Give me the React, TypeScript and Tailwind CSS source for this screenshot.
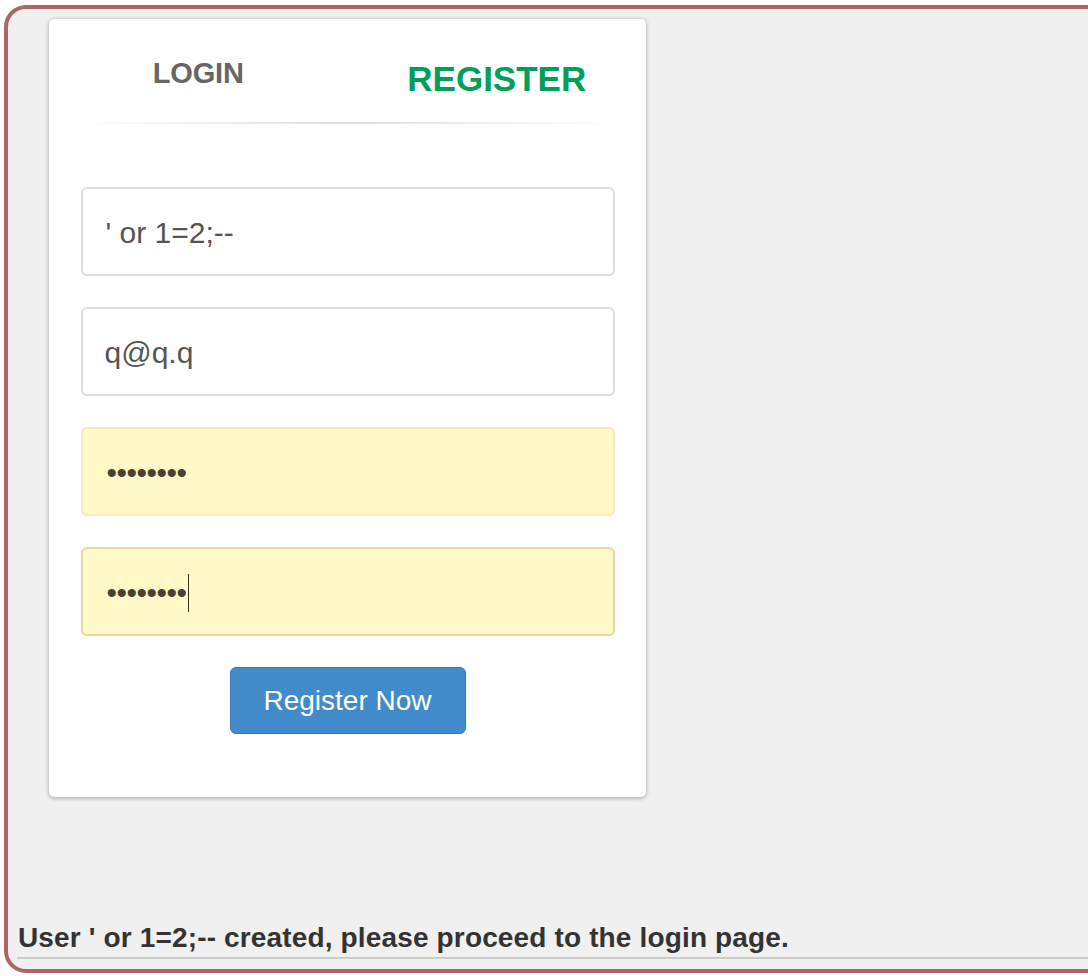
import React from "react";

export default function App() {
  const font = { fontFamily: '"Liberation Sans", Arial, Helvetica, sans-serif' };
  return (
    <div className="w-full h-[976px] bg-white overflow-hidden" style={font}>
      <div className="ml-[4px] mt-[5px] h-[968px] box-border border-[4px] border-r-0 border-[#ad6666] rounded-l-[22px] bg-[#f0f0f0] flex flex-col">
        {/* Card */}
        <div className="ml-[41px] mt-[10px] w-[597px] h-[778px] bg-white rounded-[5px] shadow-[0_1px_4px_rgba(0,0,0,0.35)] flex flex-col">
          <div className="flex h-[103px]">
            <div className="flex-1 flex justify-center pt-[40px]">
              <span className="text-[29px] leading-none font-bold text-[#666666] tracking-[-0.2px]">LOGIN</span>
            </div>
            <div className="flex-1 flex justify-center pt-[42px]">
              <span className="text-[35px] leading-none font-bold text-[#00a05a]">REGISTER</span>
            </div>
          </div>
          <div className="mx-[24px] h-[2px] bg-[linear-gradient(to_right,rgba(0,0,0,0),rgba(0,0,0,0.13),rgba(0,0,0,0))]" />
          <div className="flex flex-col items-center pt-[63px] gap-[31px]">
            <div className="w-[534px] h-[89px] box-border border-2 border-[#dddddd] rounded-[6px] bg-white flex items-center pl-[23px] pt-[2px] text-[30px] text-[#555555]">
              ' or 1=2;--
            </div>
            <div className="w-[534px] h-[89px] box-border border-2 border-[#dddddd] rounded-[6px] bg-white flex items-center pl-[22px] pt-[2px] text-[30px] text-[#555555]">
              q@q.q
            </div>
            <div className="w-[534px] h-[89px] box-border border-2 border-[#fbe9b6] rounded-[6px] bg-[#fffac8] flex items-center pl-[24px] pt-[2px] text-[30px] text-[#4a3f30] tracking-[-0.5px]">
              ••••••••
            </div>
            <div className="w-[534px] h-[89px] box-border border-2 border-[#ecd6a2] rounded-[6px] bg-[#fffac8] flex items-center pl-[24px] pt-[2px] text-[30px] text-[#4a3f30] tracking-[-0.5px]">
              <span>••••••••</span>
              <span className="inline-block w-[1px] h-[38px] bg-[#3a3020] ml-[1px]" />
            </div>
            <div className="w-[236px] h-[67px] box-border border border-[#357ebd] rounded-[6px] bg-[#428bca] flex items-center justify-center text-[28px] text-white">
              Register Now
            </div>
          </div>
        </div>
        <div className="flex-1" />
        <div className="pl-[9px] pb-[10px]">
          <div className="text-[28px] leading-none font-bold text-[#333333] whitespace-nowrap tracking-[0.15px] pl-[1px]">
            User ' or 1=2;-- created, please proceed to the login page.
          </div>
          <div className="mt-[5px] h-[2px] bg-[#cccccc]" />
        </div>
      </div>
    </div>
  );
}
